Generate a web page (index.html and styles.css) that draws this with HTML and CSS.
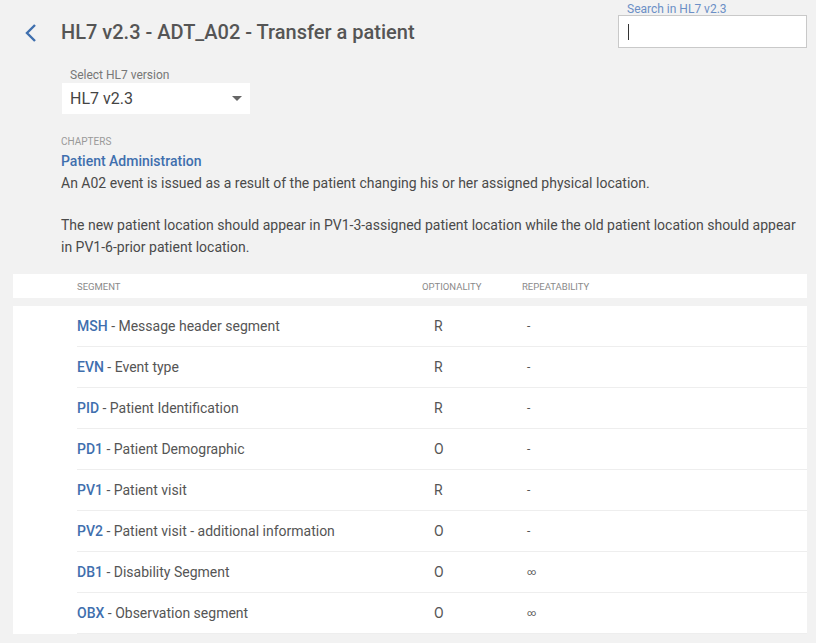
FILE: index.html
```html
<!DOCTYPE html>
<html lang="en">
<head>
    <meta charset="UTF-8">
    <meta name="viewport" content="width=device-width, initial-scale=1.0">
    <title>HL7 v2.3 - ADT_A02</title>
    <link rel="stylesheet" href="styles.css">
</head>
<body>
    <header class="top-bar">
        <a class="back-link" href="#">
            <svg width="14" height="20" viewBox="0 0 14 20"><path d="M11 2 L3 10 L11 18" fill="none" stroke="#3f6fae" stroke-width="2.4"/></svg>
        </a>
        <h1 class="page-title">HL7 v2.3 - ADT_A02 - Transfer a patient</h1>
        <div class="search">
            <label class="search-label" for="search">Search in HL7 v2.3</label>
            <div class="search-box"><span class="caret"></span></div>
        </div>
    </header>

    <section class="version">
        <div class="version-label">Select HL7 version</div>
        <div class="version-select">
            <span>HL7 v2.3</span>
            <span class="arrow"></span>
        </div>
    </section>

    <section class="event-info">
        <div class="small-caps">Chapters</div>
        <div class="chapter">Patient Administration</div>
        <p>An A02 event is issued as a result of the patient changing his or her assigned physical location.</p>
        <p>The new patient location should appear in PV1-3-assigned patient location while the old patient location should appear in PV1-6-prior patient location.</p>
    </section>

    <div class="table-head">
        <span>Segment</span>
        <span>Optionality</span>
        <span>Repeatability</span>
    </div>

    <div class="table-body">
        <div class="row"><span><b>MSH</b> - Message header segment</span><span class="opt">R</span><span class="rep">-</span></div>
        <div class="row"><span><b>EVN</b> - Event type</span><span class="opt">R</span><span class="rep">-</span></div>
        <div class="row"><span><b>PID</b> - Patient Identification</span><span class="opt">R</span><span class="rep">-</span></div>
        <div class="row"><span><b>PD1</b> - Patient Demographic</span><span class="opt">O</span><span class="rep">-</span></div>
        <div class="row"><span><b>PV1</b> - Patient visit</span><span class="opt">R</span><span class="rep">-</span></div>
        <div class="row"><span><b>PV2</b> - Patient visit - additional information</span><span class="opt">O</span><span class="rep">-</span></div>
        <div class="row"><span><b>DB1</b> - Disability Segment</span><span class="opt">O</span><span class="rep inf">&infin;</span></div>
        <div class="row"><span><b>OBX</b> - Observation segment</span><span class="opt">O</span><span class="rep inf">&infin;</span></div>
    </div>
</body>
</html>
```

FILE: styles.css
```css
body {
    margin: 0;
    background-color: #f2f2f2;
    font-family: Roboto, "Liberation Sans", sans-serif;
    color: #4a4a4a;
}

.top-bar {
    display: flex;
    align-items: flex-start;
    padding: 3px 9px 0 24px;
}

.back-link {
    display: block;
    margin-top: 20px;
    width: 14px;
    height: 20px;
}

.page-title {
    flex: 1;
    margin: 17px 0 0 23px;
    font-size: 20px;
    font-weight: 500;
    color: #555;
}

.search {
    width: 189px;
}

.search-label {
    display: block;
    padding-left: 9px;
    font-size: 12px;
    line-height: 12px;
    color: #6b8fc6;
}

.search-box {
    height: 31px;
    background: #fff;
    border: 1px solid #c9c9c9;
    display: flex;
    align-items: center;
    padding-left: 9px;
}

.caret {
    width: 1px;
    height: 16px;
    background: #333;
}

.version {
    margin: 20px 0 0 62px;
}

.version-label {
    padding-left: 8px;
    font-size: 12px;
    color: #777;
    line-height: 15px;
}

.version-select {
    width: 172px;
    height: 31px;
    padding: 0 8px;
    background: #fff;
    display: flex;
    align-items: center;
    justify-content: space-between;
    font-size: 16px;
    color: #444;
}

.arrow {
    width: 0;
    height: 0;
    border-left: 5px solid transparent;
    border-right: 5px solid transparent;
    border-top: 5px solid #666;
}

.event-info {
    padding: 22px 12px 0 61px;
    font-size: 14px;
    line-height: 22px;
}

.small-caps {
    font-size: 10px;
    line-height: 12px;
    text-transform: uppercase;
    color: #999;
}

.chapter {
    margin-top: 2px;
    font-weight: 500;
    color: #3f6fae;
}

.event-info p {
    margin: 0 0 20px;
    color: #4a4a4a;
}

.event-info p:last-child {
    margin-bottom: 0;
}

.table-head,
.row {
    display: grid;
    grid-template-columns: 345px 100px 1fr;
}

.table-head {
    margin: 16px 9px 0 13px;
    padding-left: 64px;
    height: 24px;
    align-items: center;
    background: #fff;
    font-size: 9.5px;
    text-transform: uppercase;
    color: #8a8a8a;
}

.table-body {
    margin: 8px 9px 0 13px;
    padding-left: 64px;
    background: #fff;
}

.row {
    height: 40px;
    align-items: center;
    border-bottom: 1px solid #eee;
    font-size: 14px;
    color: #555;
}

.row b {
    font-weight: 500;
    color: #3f6fae;
}

.opt {
    padding-left: 12px;
}

.rep {
    padding-left: 5px;
    font-size: 12px;
}

.rep.inf {
    font-size: 9px;
}
```
